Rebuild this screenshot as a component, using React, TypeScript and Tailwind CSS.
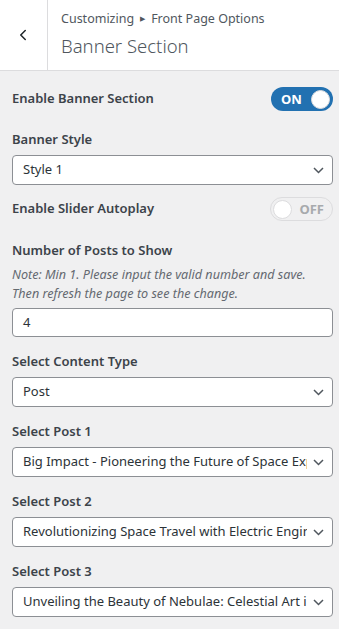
import { ChevronLeft } from 'lucide-react';

const font = { fontFamily: '"Noto Sans", "Open Sans", sans-serif' };

function Toggle({ on }: { on: boolean }) {
  if (on) {
    return (
      <div className="w-[62px] h-[24px] rounded-full bg-[#2271b1] flex items-center justify-between pl-[10px] pr-[3px]">
        <span className="text-[13px] font-bold text-white leading-none">ON</span>
        <span className="w-[19px] h-[19px] rounded-full bg-white border border-[#dcdcde]" />
      </div>
    );
  }
  return (
    <div className="w-[63px] h-[24px] rounded-full bg-[#f0f0f1] border border-[#dcdcde] flex items-center justify-between pl-[2px] pr-[8px]">
      <span className="w-[19px] h-[19px] rounded-full bg-white border border-[#dcdcde]" />
      <span className="text-[13px] font-bold text-[#a7aaad] leading-none">OFF</span>
    </div>
  );
}

function SelectBox({ value, last }: { value: string; last?: boolean }) {
  return (
    <div className={`h-[30px] bg-white border border-[#8c8f94] rounded-[4px] flex items-center pl-[10px] pr-[8px] ${last ? '' : 'mb-[14px]'}`}>
      <span className="flex-1 min-w-0 mr-[6px] text-[13px] text-[#2c3338] whitespace-nowrap overflow-hidden">{value}</span>
      <svg width="11" height="7" viewBox="0 0 11 7" className="shrink-0">
        <path d="M1 1l4.5 4.5L10 1" fill="none" stroke="#50575e" strokeWidth="1.5" />
      </svg>
    </div>
  );
}

function Label({ children }: { children: string }) {
  return <div className="text-[13px] font-semibold text-[#3c434a] leading-[20px] mb-[6px]">{children}</div>;
}

export default function App() {
  return (
    <div className="w-[339px] h-[629px] bg-[#f0f0f1] overflow-hidden" style={font}>
      {/* Header */}
      <header className="h-[71px] bg-white border-b border-[#dcdcde] flex">
        <div className="w-[48px] border-r border-[#dcdcde] flex items-center justify-center">
          <ChevronLeft className="w-[18px] h-[18px] text-[#1d2327] -ml-[2px]" strokeWidth={2} />
        </div>
        <div className="pl-[13px] pt-[9px]">
          <div className="text-[12.5px] text-[#50575e] leading-[20px] flex items-center">
            Customizing
            <span className="text-[7px] mx-[6px] text-[#50575e]">▶</span>
            Front Page Options
          </div>
          <div className="text-[18.5px] font-light text-[#50575e] leading-[28px] mt-[3px]">Banner Section</div>
        </div>
      </header>

      <main className="pl-[12px] pr-[6px] pt-[16px]">
        <div className="flex items-center justify-between h-[24px]">
          <span className="text-[13px] font-semibold text-[#3c434a]">Enable Banner Section</span>
          <Toggle on />
        </div>

        <div className="mt-[18px]">
          <Label>Banner Style</Label>
          <SelectBox value="Style 1" last />
        </div>

        <div className="flex items-center justify-between h-[24px] mt-[12px]">
          <span className="text-[13px] font-semibold text-[#3c434a]">Enable Slider Autoplay</span>
          <Toggle on={false} />
        </div>

        <div className="mt-[19px]">
          <div className="text-[13px] font-semibold text-[#3c434a] leading-[20px]">Number of Posts to Show</div>
          <p className="text-[12.6px] italic text-[#646970] leading-[19px] mt-[5px]">
            Note: Min 1. Please input the valid number and save. Then refresh the page to see the change.
          </p>
          <div className="h-[29px] bg-white border border-[#8c8f94] rounded-[4px] flex items-center px-[10px] mt-[5px] text-[13px] text-[#2c3338]">
            4
          </div>
        </div>

        <div className="mt-[14px]">
          <Label>Select Content Type</Label>
          <SelectBox value="Post" />
          <Label>Select Post 1</Label>
          <SelectBox value="Big Impact - Pioneering the Future of Space Exploration" />
          <Label>Select Post 2</Label>
          <SelectBox value="Revolutionizing Space Travel with Electric Engines" />
          <Label>Select Post 3</Label>
          <SelectBox value="Unveiling the Beauty of Nebulae: Celestial Art in Space" last />
        </div>
      </main>
    </div>
  );
}
